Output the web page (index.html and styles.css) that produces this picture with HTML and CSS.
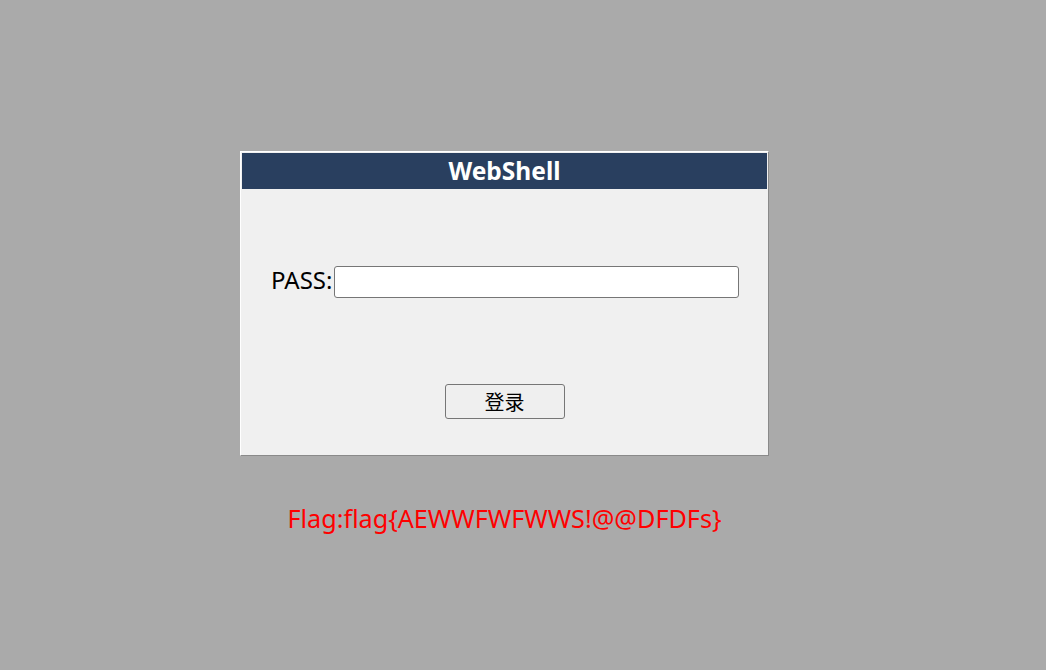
FILE: index.html
```html
<!DOCTYPE html>
<html>
<head>
<meta charset="utf-8">
<title>WebShell</title>
<link rel="stylesheet" href="styles.css">
</head>
<body>
<div class="wrap">
  <div class="panel">
    <div class="head">WebShell</div>
    <div class="content">
      <div class="row">
        <span class="label">PASS:</span><input class="pass" type="password">
      </div>
      <div class="actions">
        <button class="btn">登录</button>
      </div>
    </div>
  </div>
  <div class="flag">Flag:flag{AEWWFWFWWS!@@DFDFs}</div>
</div>
</body>
</html>
```
FILE: styles.css
```css
html, body {
  margin: 0;
  padding: 0;
  background: #aaaaaa;
  font-family: "Noto Sans", "Open Sans", "Noto Sans CJK SC", sans-serif;
}
.wrap {
  width: 529px;
  margin-left: 240px;
  padding-top: 151px;
}
.panel {
  box-sizing: border-box;
  width: 529px;
  height: 305px;
  background: #f0f0f0;
  border-top: 1px solid #ffffff;
  border-left: 1px solid #ffffff;
  border-right: 1px solid #8a8a8a;
  border-bottom: 1px solid #8a8a8a;
  padding: 1px 0 0 1px;
  display: flex;
  flex-direction: column;
}
.head {
  height: 36px;
  width: 525px;
  background: #293f5f;
  color: #ffffff;
  font-weight: bold;
  font-size: 24.5px;
  line-height: 36px;
  text-align: center;
}
.content {
  padding: 77px 29px 0 29px;
}
.row {
  display: flex;
  align-items: center;
  height: 32px;
}
.label {
  font-size: 24px;
  color: #000;
  line-height: 32px;
  position: relative;
  top: -2px;
}
.pass {
  box-sizing: border-box;
  flex: 1;
  height: 32px;
  margin: 0 0 0 2px;
  border: 1px solid #767676;
  border-radius: 3px;
  background: #fff;
}
.actions {
  display: flex;
  justify-content: center;
  padding-top: 86px;
  padding-right: 1px;
}
.btn {
  box-sizing: border-box;
  width: 120px;
  height: 35px;
  border: 1px solid #767676;
  border-radius: 3px;
  background: #efefef;
  font-family: "Noto Sans CJK SC", sans-serif;
  font-size: 20px;
  line-height: 33px;
  color: #000;
  padding: 0;
}
.flag {
  margin-top: 46px;
  text-align: center;
  color: #ff0000;
  font-size: 25.2px;
  line-height: 32px;
}
```
